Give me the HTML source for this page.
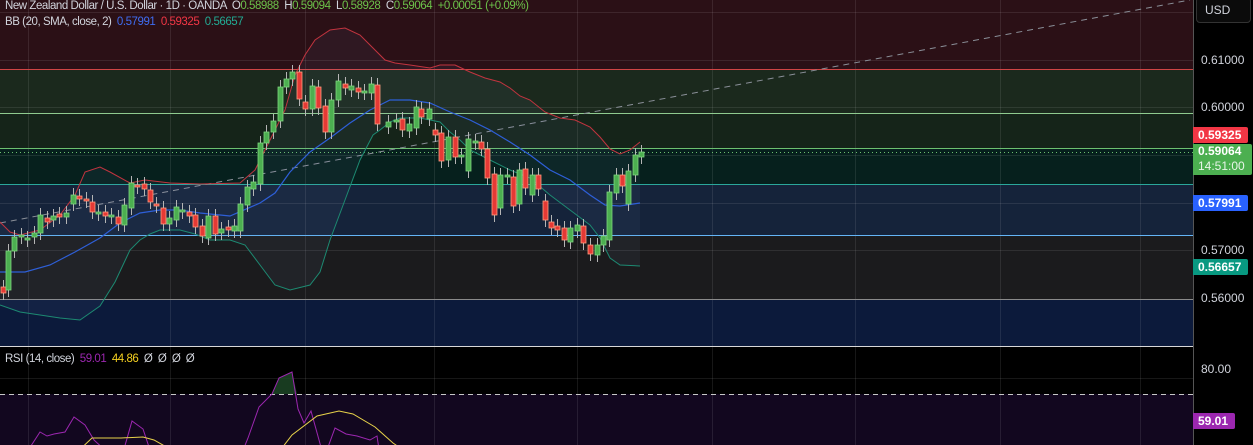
<!DOCTYPE html>
<html><head><meta charset="utf-8"><style>
html,body{margin:0;padding:0;background:#000;width:1253px;height:445px;overflow:hidden;font-family:"Liberation Sans",sans-serif;position:relative}
.t{position:absolute;font-size:12px;color:#d1d4dc;white-space:nowrap}
.h{font-size:11.5px;letter-spacing:-0.45px}
.b{position:absolute;left:1193px;font-size:12px;color:#fff;font-weight:bold;padding-left:5px;border-radius:0 2px 2px 0;line-height:16px}
</style></head><body>
<svg id="s" width="1253" height="445" style="position:absolute;left:0;top:0;overflow:hidden">
<rect x="0" y="0" width="1193" height="69" fill="#2b1016"/>
<rect x="0" y="69" width="1193" height="44" fill="#1b291d"/>
<rect x="0" y="113" width="1193" height="35" fill="#152419"/>
<rect x="0" y="148" width="1193" height="36" fill="#06201d"/>
<rect x="0" y="184" width="1193" height="51" fill="#15233a"/>
<rect x="0" y="235" width="1193" height="64" fill="#1b1b1d"/>
<rect x="0" y="299" width="1193" height="47" fill="#0c1a3b"/>
<rect x="0" y="347" width="1193" height="47" fill="#000"/>
<rect x="0" y="394" width="1193" height="51" fill="#12071f"/>
<g stroke="rgba(255,255,255,0.09)" stroke-width="1">
<line x1="0" y1="12.5" x2="1193" y2="12.5"/><line x1="0" y1="60.5" x2="1193" y2="60.5"/><line x1="0" y1="107.5" x2="1193" y2="107.5"/><line x1="0" y1="155.5" x2="1193" y2="155.5"/><line x1="0" y1="203.5" x2="1193" y2="203.5"/><line x1="0" y1="250.5" x2="1193" y2="250.5"/>
<line x1="0" y1="378.5" x2="1193" y2="378.5"/>
<line x1="28.5" y1="0" x2="28.5" y2="445"/><line x1="170.5" y1="0" x2="170.5" y2="445"/><line x1="305.5" y1="0" x2="305.5" y2="445"/><line x1="434.5" y1="0" x2="434.5" y2="445"/><line x1="577.5" y1="0" x2="577.5" y2="445"/><line x1="712.5" y1="0" x2="712.5" y2="445"/><line x1="855.5" y1="0" x2="855.5" y2="445"/><line x1="1000.5" y1="0" x2="1000.5" y2="445"/><line x1="1140.5" y1="0" x2="1140.5" y2="445"/>
</g>
<line x1="0" y1="69.5" x2="1193" y2="69.5" stroke="#d04545"/>
<line x1="0" y1="113.5" x2="1193" y2="113.5" stroke="#8fcb8f"/>
<line x1="0" y1="148.5" x2="1193" y2="148.5" stroke="#6cc070"/>
<line x1="0" y1="152.5" x2="1193" y2="152.5" stroke="#6cc070" stroke-dasharray="1 3"/>
<line x1="0" y1="184.5" x2="1193" y2="184.5" stroke="#2aa79b"/>
<line x1="0" y1="235.5" x2="1193" y2="235.5" stroke="#64b5f6"/>
<line x1="0" y1="299.5" x2="1193" y2="299.5" stroke="#8a8a8a"/>
<line x1="0" y1="223" x2="1190" y2="0" stroke="#8a8f98" stroke-dasharray="6 5"/>
<line x1="0" y1="346.5" x2="1193" y2="346.5" stroke="#d8d8d8"/>
<line x1="0" y1="394.5" x2="1193" y2="394.5" stroke="#c8c8c8" stroke-dasharray="5 4"/>
<line x1="1193.5" y1="0" x2="1193.5" y2="445" stroke="#555"/>
<g id="bands"></g>
<g id="cd"></g>
<g id="rsi"></g>
</svg>
<div class="t h" style="left:5px;top:0px">New Zealand Dollar / U.S. Dollar · 1D · OANDA &nbsp;O<span style="color:#6cc24a">0.58988</span> &nbsp;H<span style="color:#6cc24a">0.59094</span> &nbsp;L<span style="color:#6cc24a">0.58928</span> &nbsp;C<span style="color:#6cc24a">0.59064</span> &nbsp;<span style="color:#6cc24a">+0.00051 (+0.09%)</span></div>
<div class="t h" style="left:5px;top:16px">BB (20, SMA, close, 2) &nbsp;<span style="color:#3f6cf0">0.57991</span> &nbsp;<span style="color:#f23645">0.59325</span> &nbsp;<span style="color:#22ab94">0.56657</span></div>
<div class="t h" style="left:5px;top:353px">RSI (14, close) &nbsp;<span style="color:#9c27b0">59.01</span> &nbsp;<span style="color:#f5d020">44.86</span> &nbsp;Ø &nbsp;Ø &nbsp;Ø &nbsp;Ø</div>
<div style="position:absolute;left:1196px;top:-3px;width:53px;height:24px;border:1px solid #333;border-radius:4px;background:#0b0b0b"></div>
<div class="t" style="left:1205px;top:3px">USD</div>
<div class="t" style="left:1201px;top:53px">0.61000</div>
<div class="t" style="left:1201px;top:100px">0.60000</div>
<div class="t" style="left:1201px;top:243px">0.57000</div>
<div class="t" style="left:1201px;top:291px">0.56000</div>
<div class="t" style="left:1201px;top:362px">80.00</div>
<div class="b" style="top:127px;width:50px;background:#f23645">0.59325</div>
<div class="b" style="top:144px;width:54px;height:31px;background:#4caf50;line-height:15px">0.59064<br><span style="font-weight:normal;color:#e8f5e9">14:51:00</span></div>
<div class="b" style="top:195px;width:50px;background:#2962ff">0.57991</div>
<div class="b" style="top:259px;width:50px;background:#089981">0.56657</div>
<div class="b" style="top:413px;width:37px;background:#9c27b0">59.01</div>
<script>
var NS="http://www.w3.org/2000/svg";
function el(p,t,a){var e=document.createElementNS(NS,t);for(var k in a)e.setAttribute(k,a[k]);p.appendChild(e);return e}
function pts(a){return a.map(function(p){return p.join(",")}).join(" ")}
var up=[[0,222],[10,232],[20,235],[40,230],[60,215],[75,195],[85,172],[100,167],[110,172],[130,183],[145,180],[170,183],[200,184],[240,183],[255,170],[270,140],[285,110],[295,75],[305,55],[315,40],[330,30],[345,28],[360,35],[375,50],[385,60],[395,63],[410,65],[430,68],[440,65],[455,65],[470,72],[485,78],[500,82],[510,88],[520,96],[530,100],[545,112],[560,118],[575,120],[590,127],[600,137],[610,149],[620,154],[630,150],[640,142]];
var mid=[[0,272],[25,272],[50,265],[75,252],[100,238],[120,223],[140,213],[160,210],[180,210],[200,213],[230,216],[260,203],[275,193],[290,172],[310,152],[330,138],[350,123],[370,110],[390,100],[410,100],[430,103],[450,112],[470,120],[490,130],[510,142],[530,155],[550,170],[570,180],[590,195],[605,205],[620,206],[640,203]];
var lo=[[0,305],[20,312],[40,315],[60,318],[80,320],[100,306],[115,282],[130,250],[140,240],[150,234],[160,230],[180,230],[195,234],[210,240],[230,240],[245,245],[260,265],[275,285],[290,290],[310,285],[320,272],[330,240],[345,200],[360,160],[373,135],[380,130],[390,122],[400,118],[420,118],[440,122],[450,132],[460,140],[470,150],[490,160],[510,170],[530,178],[550,195],[570,210],[590,225],[600,238],[610,258],[620,265],[640,266]];
var g=document.getElementById("bands");
el(g,"polygon",{points:pts(up.concat(lo.slice().reverse())),fill:"rgba(120,140,200,0.07)"});
el(g,"polyline",{points:pts(up),fill:"none",stroke:"#c2343f","stroke-width":1});
el(g,"polyline",{points:pts(mid),fill:"none",stroke:"#2e5fd8","stroke-width":1.2});
el(g,"polyline",{points:pts(lo),fill:"none",stroke:"#1d8a72","stroke-width":1});
var C=[[3,287,293],[8,290,251],[14,251,237],[21,237,235],[27,238,238],[34,237,233],[40,233,215],[47,218,222],[53,220,216],[59,214,217],[66,217,213],[73,204,195],[79,196,199],[86,199,201],[92,202,212],[98,213,212],[105,212,216],[111,215,215],[118,217,224],[124,225,205],[131,208,183],[137,185,187],[144,184,189],[150,190,202],[156,204,206],[163,208,224],[169,224,218],[176,220,207],[182,210,210],[189,212,216],[195,215,227],[202,226,236],[208,238,216],[215,216,234],[221,233,229],[228,227,230],[234,231,226],[240,231,204],[247,205,187],[253,189,182],[260,184,143],[266,143,132],[273,132,121],[280,121,87],[286,87,79],[292,79,72],[299,72,99],[305,102,109],[312,109,86],[318,87,108],[325,106,132],[331,132,100],[338,100,81],[345,84,88],[351,90,86],[358,88,92],[364,93,91],[371,93,84],[377,85,124],[388,127,122],[396,122,120],[402,119,130],[409,131,124],[416,128,107],[421,109,117],[429,119,109],[435,130,135],[441,133,161],[448,160,137],[455,137,157],[461,155,155],[468,171,139],[475,141,141],[481,142,149],[487,149,178],[494,174,215],[500,208,175],[507,175,175],[513,177,206],[519,204,170],[525,169,188],[532,195,175],[538,175,189],[545,201,220],[551,222,228],[557,226,230],[564,228,240],[570,242,228],[577,231,225],[583,226,243],[590,245,254],[597,255,245],[603,245,236],[609,240,192],[616,193,175],[622,175,186],[628,204,171],[635,175,155],[641,157,152]];
var cg=document.getElementById("cd");
C.forEach(function(c){var x=c[0],o=c[1],cl=c[2];var gr=cl<=o;var t=Math.min(o,cl),b=Math.max(o,cl);if(b-t<2){b=t+2}
var col=gr?"#4caf50":"#e53935",bc=gr?"#7ed67f":"#ff9e80";
el(cg,"line",{x1:x+0.5,y1:t-7,x2:x+0.5,y2:b+7,stroke:"#b5b5b5","stroke-width":1});
el(cg,"rect",{x:x-2,y:t,width:5,height:b-t,fill:col,stroke:bc,"stroke-width":0.8});});
var P=[[0,445],[7,445],[13,444],[27,445],[40,432],[47,436],[54,434],[65,432],[74,417],[85,425],[94,440],[100,445],[125,445],[132,421],[143,429],[150,445],[240,445],[248,438],[259,407],[272,394],[279,378],[292,372],[298,409],[304,423],[311,411],[320,445],[324,445],[335,428],[346,434],[357,436],[370,440],[377,436],[381,445],[413,445],[417,460],[609,445],[614,445],[616,445],[623,445],[634,452],[641,447]];
P=[[0,452],[7,449],[13,447],[27,452],[40,432],[47,436],[54,434],[65,432],[74,417],[85,425],[94,440],[107,452],[118,470],[132,421],[143,429],[152,456],[174,467],[188,478],[208,476],[237,465],[248,438],[259,407],[272,394],[279,378],[292,372],[298,409],[304,423],[311,411],[324,458],[335,428],[346,434],[357,436],[370,440],[377,436],[383,476],[397,473],[411,478],[417,460],[429,469],[440,480],[600,480],[609,474],[616,461],[623,470],[634,452],[641,447]];
var Y=[[40,490],[54,481],[71,458],[92,438],[121,438],[143,437],[154,440],[170,449],[188,455],[205,463],[223,472],[237,481],[250,478],[272,461],[292,435],[317,416],[339,411],[353,414],[375,427],[393,443],[406,452],[429,458],[460,479],[480,490]];
var r=document.getElementById("rsi");
el(r,"polygon",{points:"259,394 265,394 272,394 279,378 292,372 297,394",fill:"#1e4a28",opacity:0.8});
el(r,"polyline",{points:pts(P),fill:"none",stroke:"#9c27b0","stroke-width":1});
el(r,"polyline",{points:pts(Y),fill:"none",stroke:"#e8d34a","stroke-width":1});
</script>
</body></html>
